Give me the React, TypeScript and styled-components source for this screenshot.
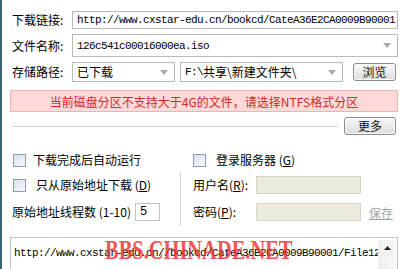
import React from "react";
import styled, { createGlobalStyle } from "styled-components";

const cjk = `"Noto Sans CJK SC", "Liberation Sans", sans-serif`;
const mono = `"Liberation Mono", "Noto Sans CJK SC", monospace`;

const Global = createGlobalStyle`
  html, body { margin: 0; padding: 0; background: #fff; }
  body { font-family: ${cjk}; font-size: 12px; color: #000; }
`;

const Panel = styled.div`
  position: relative;
  width: 402px;
  height: 269px;
  box-sizing: border-box;
  border-left: 2px solid #3b6577;
  padding: 11px 4px 0 8px;
  overflow: hidden;
  display: flex;
  flex-direction: column;
`;

const FieldRow = styled.div<{ $h: number; $mt?: number }>`
  display: grid;
  grid-template-columns: 62px 1fr;
  align-items: center;
  height: ${(p) => p.$h}px;
  margin-top: ${(p) => p.$mt ?? 0}px;
`;

const Label = styled.span`
  padding-left: 2px;
  font-family: ${cjk};
  font-size: 12px;
  line-height: 14px;
  white-space: nowrap;
`;

const Controls = styled.div`
  display: flex;
  align-items: center;
  height: 100%;
  min-width: 0;
`;

const Field = styled.div<{ $w?: number }>`
  box-sizing: border-box;
  height: 100%;
  border: 1px solid #bababa;
  background: #fff;
  display: flex;
  align-items: center;
  padding-left: 4px;
  overflow: hidden;
  white-space: nowrap;
  ${(p) => (p.$w ? `width:${p.$w}px; flex: none;` : `flex: 1; min-width: 0;`)}
`;

const Mono = styled.span`
  font-family: ${mono};
  font-size: 11px;
  letter-spacing: -0.6px;
  line-height: 14px;
`;

const Cjk = styled.span`
  font-family: ${cjk};
  font-size: 12px;
  line-height: 14px;
`;

const ArrowBox = styled.span`
  margin-left: auto;
  margin-right: 6px;
  flex: none;
  display: flex;
  align-items: center;
  padding-left: 4px;
`;

const DownArrow = () => (
  <ArrowBox>
    <svg width="8" height="5" viewBox="0 0 8 5">
      <path d="M0 0h8L4 5z" fill="#a8a8a8" />
    </svg>
  </ArrowBox>
);

const Button = styled.div<{ $w: number; $h: number }>`
  box-sizing: border-box;
  width: ${(p) => p.$w}px;
  height: ${(p) => p.$h}px;
  flex: none;
  border: 1px solid #8a8a8a;
  border-radius: 3px;
  background: linear-gradient(#fafafa, #e9e9e9 55%, #dcdcdc);
  box-shadow: inset 0 0 0 1px #fdfdfd;
  display: flex;
  align-items: center;
  justify-content: center;
  font-family: ${cjk};
  font-size: 12px;
  line-height: 14px;
  color: #111;
`;

const Warning = styled.div`
  margin-top: 8px;
  height: 22px;
  box-sizing: border-box;
  border: 1px solid #efb3b3;
  background: #ffd9d9;
  color: #d22a2a;
  display: flex;
  align-items: center;
  justify-content: center;
  font-family: ${cjk};
  font-size: 12px;
  white-space: nowrap;
`;

const MoreRow = styled.div`
  margin-top: 5px;
  height: 18px;
  display: flex;
  align-items: center;
`;

const Rule = styled.div`
  flex: 1;
  height: 1px;
  background: #d4d4d4;
  margin: 0 6px 0 2px;
`;

const Options = styled.div`
  margin-top: 13px;
  display: grid;
  grid-template-columns: 170px 1px 1fr;
  grid-template-rows: 24px 26px 28px;
  align-items: center;
`;

const VSep = styled.div`
  grid-column: 2;
  grid-row: 2 / span 2;
  align-self: stretch;
  background: #d6d6d6;
`;

const Cell = styled.div<{ $col: number; $row: number; $pl?: number }>`
  grid-column: ${(p) => p.$col};
  grid-row: ${(p) => p.$row};
  display: flex;
  align-items: center;
  padding-left: ${(p) => p.$pl ?? 0}px;
  white-space: nowrap;
  height: 100%;
`;

const Box = styled.span`
  box-sizing: border-box;
  width: 13px;
  height: 13px;
  flex: none;
  border: 1px solid #8c9db3;
  background: linear-gradient(135deg, #d9e1ec, #f7f9fc);
`;

const CheckText = styled.span<{ $gap: number }>`
  margin-left: ${(p) => p.$gap}px;
  font-family: ${cjk};
  font-size: 12px;
  line-height: 14px;
`;

const Small = styled.input`
  box-sizing: border-box;
  border: 1px solid #c4c4c4;
  background: #fff;
  width: 25px;
  height: 18px;
  margin: 0 0 0 4px;
  padding: 0 0 0 4px;
  font-family: ${mono};
  font-size: 12px;
  outline: none;
`;

const Beige = styled.div`
  box-sizing: border-box;
  width: 105px;
  height: 18px;
  border: 1px solid #d6d4c6;
  background: #ecebdd;
  flex: none;
`;

const FormLabel = styled.span<{ $w: number }>`
  width: ${(p) => p.$w}px;
  flex: none;
  font-family: ${cjk};
  font-size: 12px;
  line-height: 14px;
  white-space: nowrap;
`;

const SaveLink = styled.span`
  margin-left: 8px;
  color: #a3a3a3;
  text-decoration: underline;
  font-family: ${cjk};
  font-size: 12px;
`;

const TextArea = styled.div`
  margin-top: 11px;
  flex: 1;
  box-sizing: border-box;
  border: 1px solid #c2c2c2;
  border-bottom: none;
  display: flex;
  min-height: 0;
`;

const TextBody = styled.div`
  flex: 1;
  min-width: 0;
  overflow: hidden;
  white-space: nowrap;
  padding: 4px 0 0 3px;
`;

const Scroll = styled.div`
  width: 18px;
  flex: none;
  margin: 2px 1px 0 0;
  background: linear-gradient(90deg, #eeeeee, #f8f8f8);
  display: flex;
  justify-content: center;
  padding-top: 6px;
`;

const Watermark = styled.div`
  position: absolute;
  left: 103px;
  top: 236px;
  font-family: "Liberation Serif", serif;
  font-weight: bold;
  font-size: 28px;
  line-height: 28px;
  color: rgba(232, 48, 48, 0.82);
  transform: scaleX(0.73);
  transform-origin: left top;
  white-space: nowrap;
  pointer-events: none;
`;

export default function App() {
  return (
    <>
      <Global />
      <Panel>
        <FieldRow $h={18}>
          <Label>下载链接:</Label>
          <Controls>
            <Field>
              <Mono>http://www.cxstar-edu.cn/bookcd/CateA36E2CA0009B90001</Mono>
            </Field>
          </Controls>
        </FieldRow>
        <FieldRow $h={23} $mt={5}>
          <Label>文件名称:</Label>
          <Controls>
            <Field>
              <Mono>126c541c00016000ea.iso</Mono>
              <DownArrow />
            </Field>
          </Controls>
        </FieldRow>
        <FieldRow $h={20} $mt={5}>
          <Label>存储路径:</Label>
          <Controls>
            <Field $w={103}>
              <Cjk>已下载</Cjk>
              <DownArrow />
            </Field>
            <Field $w={163} style={{ marginLeft: 5 }}>
              <Mono>F:\</Mono>
              <Cjk>共享\新建文件夹\</Cjk>
              <DownArrow />
            </Field>
            <Button $w={43} $h={18} style={{ marginLeft: 10 }}>
              浏览
            </Button>
          </Controls>
        </FieldRow>
        <Warning>当前磁盘分区不支持大于4G的文件，请选择NTFS格式分区</Warning>
        <MoreRow>
          <Rule />
          <Button $w={52} $h={18} style={{ marginRight: 2 }}>
            更多
          </Button>
        </MoreRow>
        <Options>
          <Cell $col={1} $row={1} $pl={3}>
            <Box />
            <CheckText $gap={7}>下载完成后自动运行</CheckText>
          </Cell>
          <Cell $col={3} $row={1} $pl={12}>
            <Box />
            <CheckText $gap={10}>
              登录服务器 (<u>G</u>)
            </CheckText>
          </Cell>
          <Cell $col={1} $row={2} $pl={3}>
            <Box />
            <CheckText $gap={10}>
              只从原始地址下载 (<u>D</u>)
            </CheckText>
          </Cell>
          <Cell $col={1} $row={3} $pl={2}>
            <Cjk>原始地址线程数 (1-10)</Cjk>
            <Small defaultValue="5" />
          </Cell>
          <VSep />
          <Cell $col={3} $row={2} $pl={12}>
            <FormLabel $w={63}>
              用户名(<u>R</u>):
            </FormLabel>
            <Beige />
          </Cell>
          <Cell $col={3} $row={3} $pl={12}>
            <FormLabel $w={63}>
              密码(<u>P</u>):
            </FormLabel>
            <Beige />
            <SaveLink>保存</SaveLink>
          </Cell>
        </Options>
        <TextArea>
          <TextBody>
            <Mono>http://www.cxstar-edu.cn//bookcd/CateA36E2CA0009B90001/File12</Mono>
          </TextBody>
          <Scroll>
            <svg width="7" height="4" viewBox="0 0 7 4">
              <path d="M0 4h7L3.5 0z" fill="#222" />
            </svg>
          </Scroll>
        </TextArea>
        <Watermark>BBS.CHINADE.NET</Watermark>
      </Panel>
    </>
  );
}
